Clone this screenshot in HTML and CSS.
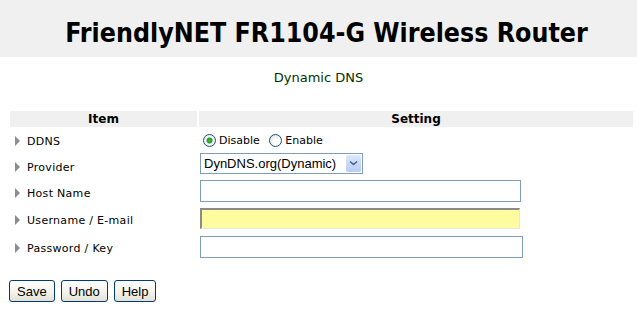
FILE: index.html
```html
<!DOCTYPE html>
<html lang="en">
<head>
    <meta charset="UTF-8">
    <title>Dynamic DNS</title>
    <link rel="stylesheet" href="styles.css">
</head>
<body>
    <div class="banner">
        <h1>FriendlyNET FR1104-G Wireless Router</h1>
    </div>
    <p class="caption">Dynamic DNS</p>
    <table class="setup">
        <tr>
            <th class="item">Item</th>
            <th>Setting</th>
        </tr>
        <tr class="r1">
            <td class="label"><span class="arrow"></span>DDNS</td>
            <td>
                <label class="radio"><input type="radio" name="ddns" checked>Disable</label>
                <label class="radio"><input type="radio" name="ddns">Enable</label>
            </td>
        </tr>
        <tr class="r2">
            <td class="label"><span class="arrow"></span>Provider</td>
            <td>
                <span class="combo">
                    <select>
                        <option>DynDNS.org(Dynamic)</option>
                        <option>DynDNS.org(Custom)</option>
                        <option>TZO.com</option>
                    </select>
                    <span class="drop"><svg width="9" height="6" viewBox="0 0 9 6"><path d="M1 1.5 L4.5 4.5 L8 1.5" fill="none" stroke="#4d6185" stroke-width="1.6"/></svg></span>
                </span>
            </td>
        </tr>
        <tr class="r3">
            <td class="label"><span class="arrow"></span>Host Name</td>
            <td><input type="text" class="field"></td>
        </tr>
        <tr class="r4">
            <td class="label"><span class="arrow"></span>Username / E-mail</td>
            <td><input type="text" class="field focus"></td>
        </tr>
        <tr class="r5">
            <td class="label"><span class="arrow"></span>Password / Key</td>
            <td><input type="password" class="field wide"></td>
        </tr>
    </table>
    <div class="actions">
        <button>Save</button>
        <button>Undo</button>
        <button>Help</button>
    </div>
</body>
</html>
```

FILE: styles.css
```css
body {
    margin: 0;
    font-family: "DejaVu Sans", Verdana, sans-serif;
    font-size: 11px;
    color: black;
    background: white;
}
.banner {
    height: 57px;
    background: #f0f0f0;
}
h1 {
    margin: 0;
    padding: 17px 0 0 16px;
    font-size: 26.5px;
    line-height: 32px;
    font-weight: bold;
    font-stretch: condensed;
    text-align: center;
}
.caption {
    margin: 12px 0 0;
    text-align: center;
    font-size: 13px;
    line-height: 18px;
    color: #003300;
}
.setup {
    margin: 22px 0 0 8px;
    width: 627px;
    border-spacing: 2px;
}
.setup th {
    background: #f0f0f0;
    height: 16px;
    padding: 0;
    font-size: 12px;
    line-height: 16px;
}
.setup th.item {
    width: 187px;
}
.setup td {
    padding: 0;
    vertical-align: middle;
}
.r1 td { height: 25px; }
.r2 td { height: 22px; }
.r3 td { height: 26px; }
.r4 td { height: 25px; }
.r5 td { height: 26px; }
.label {
    letter-spacing: 0.3px;
}
.arrow {
    display: inline-block;
    width: 0;
    height: 0;
    margin: 0 7px 0 5px;
    border-top: 5px solid transparent;
    border-bottom: 5px solid transparent;
    border-left: 5px solid #8c8c8c;
    vertical-align: -1px;
}
.radio {
    display: inline-flex;
    align-items: center;
    margin-right: 2px;
}
.radio input {
    appearance: none;
    width: 13px;
    height: 13px;
    margin: 0 3px 0 4px;
    border: 1px solid #1c5180;
    border-radius: 50%;
    background: radial-gradient(circle at 60% 60%, #ffffff 30%, #d6d4cc 100%);
}
.radio input:checked {
    background: radial-gradient(circle, #3fc43f 0, #1e9a1e 2.5px, #ffffff 3.5px, #ffffff 40%, #d6d4cc 100%);
}
.combo {
    position: relative;
    display: inline-block;
    margin: -8px 0 0 1px;
    vertical-align: top;
}
.combo select {
    appearance: none;
    width: 163px;
    height: 21px;
    padding: 0 0 0 3px;
    border: 1px solid #7f9db9;
    border-radius: 0;
    background: white;
    font-family: "Liberation Sans", Arial, sans-serif;
    font-size: 13px;
    color: black;
}
.drop {
    position: absolute;
    top: 2px;
    right: 2px;
    width: 15px;
    height: 17px;
    border-radius: 2px;
    background: linear-gradient(#dde7fb, #b7cbf4);
    display: flex;
    align-items: center;
    justify-content: center;
}
.field {
    box-sizing: border-box;
    width: 321px;
    height: 22px;
    margin: -5px 0 0 1px;
    padding: 0 3px;
    border: 1px solid #7f9db9;
    background: white;
    display: block;
}
.field.focus {
    width: 320px;
    height: 21px;
    border-top: 2px solid #8a8a8a;
    border-left: 2px solid #8a8a8a;
    border-right: 1px solid #e6e6e6;
    border-bottom: 1px solid #e6e6e6;
    background: #fffca0;
    margin-top: -5px;
}
.field.wide {
    width: 323px;
    margin-top: -3px;
}
.actions {
    display: flex;
    gap: 6px;
    margin: 17px 0 0 9px;
}
.actions button {
    height: 22px;
    padding: 0 7px;
    border: 1px solid #003c74;
    border-radius: 3px;
    background: linear-gradient(#ffffff, #f2f1ea 60%, #e3e1d6);
    font-family: "Liberation Sans", Arial, sans-serif;
    font-size: 13px;
    color: black;
}
```
